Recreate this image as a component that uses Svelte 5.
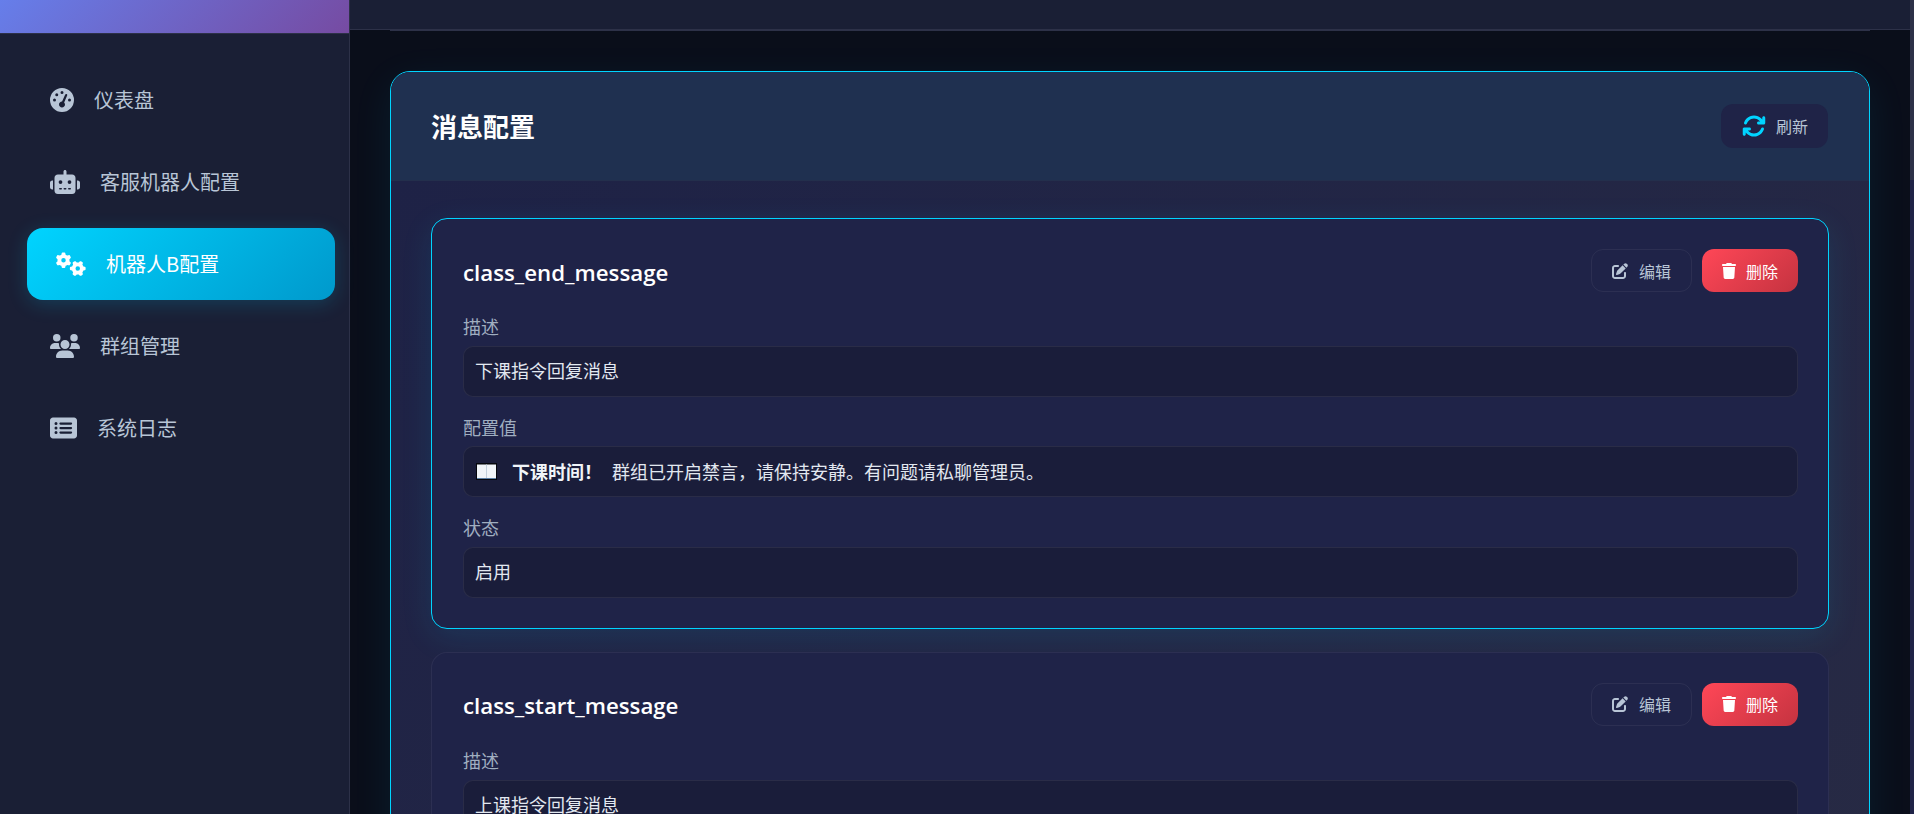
<script>
  const navItems = [
    { label: '仪表盘', icon: 'gauge' },
    { label: '客服机器人配置', icon: 'robot' },
    { label: '机器人B配置', icon: 'gears', active: true },
    { label: '群组管理', icon: 'users' },
    { label: '系统日志', icon: 'list' }
  ];

  const icons = {
    gauge: { box: '0 0 512 512', d: 'M0 256a256 256 0 1 1 512 0A256 256 0 1 1 0 256zM288 96a32 32 0 1 0 -64 0 32 32 0 1 0 64 0zM256 416c35.3 0 64-28.7 64-64c0-17.4-6.9-33.1-18.1-44.6L366 161.7c5.3-12.1-.2-26.3-12.3-31.6s-26.3 .2-31.6 12.3L257.9 288c-.6 0-1.3 0-1.9 0c-35.3 0-64 28.7-64 64s28.7 64 64 64zM176 144a32 32 0 1 0 -64 0 32 32 0 1 0 64 0zM96 288a32 32 0 1 0 0-64 32 32 0 1 0 0 64zm352-32a32 32 0 1 0 -64 0 32 32 0 1 0 64 0z' },
    robot: { box: '0 0 640 512', d: 'M320 0c17.7 0 32 14.3 32 32V96H472c39.8 0 72 32.2 72 72V440c0 39.8-32.2 72-72 72H168c-39.8 0-72-32.2-72-72V168c0-39.8 32.2-72 72-72H288V32c0-17.7 14.3-32 32-32zM208 384c-8.8 0-16 7.2-16 16s7.2 16 16 16h32c8.8 0 16-7.2 16-16s-7.2-16-16-16H208zm96 0c-8.8 0-16 7.2-16 16s7.2 16 16 16h32c8.8 0 16-7.2 16-16s-7.2-16-16-16H304zm96 0c-8.8 0-16 7.2-16 16s7.2 16 16 16h32c8.8 0 16-7.2 16-16s-7.2-16-16-16H400zM264 256a40 40 0 1 0 -80 0 40 40 0 1 0 80 0zm152 40a40 40 0 1 0 0-80 40 40 0 1 0 0 80zM48 224H64V416H48c-26.5 0-48-21.5-48-48V272c0-26.5 21.5-48 48-48zm544 0c26.5 0 48 21.5 48 48v96c0 26.5-21.5 48-48 48H576V224h16z' },
    gears: { box: '0 0 640 512', d: 'M308.5 135.3c7.1-6.3 9.9-16.2 6.2-25c-2.3-5.3-4.8-10.5-7.6-15.5L304 89.4c-3-5-6.3-9.9-9.8-14.6c-5.7-7.6-15.7-10.1-24.7-7.1l-28.2 9.3c-10.7-8.8-23-16-36.2-20.9L199 27.1c-1.9-9.3-9.1-16.7-18.5-17.8C173.9 8.4 167.2 8 160.4 8h-.7c-6.8 0-13.5 .4-20.1 1.2c-9.4 1.1-16.6 8.6-18.5 17.8L115 56.1c-13.3 5-25.5 12.1-36.2 20.9L50.5 67.8c-9-3-19-.5-24.7 7.1c-3.5 4.7-6.8 9.6-9.9 14.6l-3 5.3c-2.8 5-5.3 10.2-7.6 15.6c-3.7 8.7-.9 18.6 6.2 25l22.2 19.8C32.6 161.9 32 168.9 32 176s.6 14.1 1.7 20.9L11.5 216.7c-7.1 6.3-9.9 16.2-6.2 25c2.3 5.3 4.8 10.5 7.6 15.6l3 5.2c3 5.1 6.3 9.9 9.9 14.6c5.7 7.6 15.7 10.1 24.7 7.1l28.2-9.3c10.7 8.8 23 16 36.2 20.9l6.1 29.1c1.9 9.3 9.1 16.7 18.5 17.8c6.7 .8 13.5 1.2 20.4 1.2s13.7-.4 20.4-1.2c9.4-1.1 16.6-8.6 18.5-17.8l6.1-29.1c13.3-5 25.5-12.1 36.2-20.9l28.2 9.3c9 3 19 .5 24.7-7.1c3.5-4.7 6.8-9.5 9.8-14.6l3.1-5.4c2.8-5 5.3-10.2 7.6-15.5c3.7-8.7 .9-18.6-6.2-25l-22.2-19.8c1.1-6.8 1.7-13.8 1.7-20.9s-.6-14.1-1.7-20.9l22.2-19.8zM112 176a48 48 0 1 1 96 0 48 48 0 1 1 -96 0zM504.7 500.5c6.3 7.1 16.2 9.9 25 6.2c5.3-2.3 10.5-4.8 15.5-7.6l5.4-3.1c5-3 9.9-6.3 14.6-9.8c7.6-5.7 10.1-15.7 7.1-24.7l-9.3-28.2c8.8-10.7 16-23 20.9-36.2l29.1-6.1c9.3-1.9 16.7-9.1 17.8-18.5c.8-6.7 1.2-13.5 1.2-20.4s-.4-13.7-1.2-20.4c-1.1-9.4-8.6-16.6-17.8-18.5L583.9 307c-5-13.3-12.1-25.5-20.9-36.2l9.3-28.2c3-9 .5-19-7.1-24.7c-4.7-3.5-9.6-6.8-14.6-9.9l-5.3-3c-5-2.8-10.2-5.3-15.6-7.6c-8.7-3.7-18.6-.9-25 6.2l-19.8 22.2c-6.8-1.1-13.8-1.7-20.9-1.7s-14.1 .6-20.9 1.7l-19.8-22.2c-6.3-7.1-16.2-9.9-25-6.2c-5.3 2.3-10.5 4.8-15.6 7.6l-5.2 3c-5.1 3-9.9 6.3-14.6 9.9c-7.6 5.7-10.1 15.7-7.1 24.7l9.3 28.2c-8.8 10.7-16 23-20.9 36.2L315.1 313c-9.3 1.9-16.7 9.1-17.8 18.5c-.8 6.7-1.2 13.5-1.2 20.4s.4 13.7 1.2 20.4c1.1 9.4 8.6 16.6 17.8 18.5l29.1 6.1c5 13.3 12.1 25.5 20.9 36.2l-9.3 28.2c-3 9-.5 19 7.1 24.7c4.7 3.5 9.5 6.8 14.6 9.8l5.4 3.1c5 2.8 10.2 5.3 15.5 7.6c8.7 3.7 18.6 .9 25-6.2l19.8-22.2c6.8 1.1 13.8 1.7 20.9 1.7s14.1-.6 20.9-1.7l19.8 22.2zM464 304a48 48 0 1 1 0 96 48 48 0 1 1 0-96z' },
    users: { box: '0 0 640 512', d: 'M144 0a80 80 0 1 1 0 160A80 80 0 1 1 144 0zM512 0a80 80 0 1 1 0 160A80 80 0 1 1 512 0zM0 298.7C0 239.8 47.8 192 106.7 192h42.7c15.9 0 31 3.5 44.6 9.7c-1.3 7.2-1.9 14.7-1.9 22.3c0 38.2 16.8 72.5 43.3 96c-.2 0-.4 0-.7 0H21.3C9.6 320 0 310.4 0 298.7zM405.3 320c-.2 0-.4 0-.7 0c26.6-23.5 43.3-57.8 43.3-96c0-7.6-.7-15-1.9-22.3c13.6-6.3 28.7-9.7 44.6-9.7h42.7C592.2 192 640 239.8 640 298.7c0 11.8-9.6 21.3-21.3 21.3H405.3zM224 224a96 96 0 1 1 192 0 96 96 0 1 1 -192 0zM128 485.3C128 411.7 187.7 352 261.3 352H378.7C452.3 352 512 411.7 512 485.3c0 14.7-11.9 26.7-26.7 26.7H154.7c-14.7 0-26.7-11.9-26.7-26.7z' },
    list: { box: '0 0 576 512', d: 'M0 96C0 60.7 28.7 32 64 32H512c35.3 0 64 28.7 64 64V416c0 35.3-28.7 64-64 64H64c-35.3 0-64-28.7-64-64V96zM128 288a32 32 0 1 0 0-64 32 32 0 1 0 0 64zm32-128a32 32 0 1 0 -64 0 32 32 0 1 0 64 0zM128 384a32 32 0 1 0 0-64 32 32 0 1 0 0 64zm96-248c-13.3 0-24 10.7-24 24s10.7 24 24 24H448c13.3 0 24-10.7 24-24s-10.7-24-24-24H224zm0 96c-13.3 0-24 10.7-24 24s10.7 24 24 24H448c13.3 0 24-10.7 24-24s-10.7-24-24-24H224zm0 96c-13.3 0-24 10.7-24 24s10.7 24 24 24H448c13.3 0 24-10.7 24-24s-10.7-24-24-24H224z' },
    sync: { box: '0 0 512 512', d: 'M105.1 202.6c7.7-21.8 20.2-42.3 37.8-59.8c62.5-62.5 163.8-62.5 226.3 0L386.3 160H352c-17.7 0-32 14.3-32 32s14.3 32 32 32H463.5c0 0 0 0 0 0h.4c17.7 0 32-14.3 32-32V80c0-17.7-14.3-32-32-32s-32 14.3-32 32v35.2L414.4 97.6c-87.5-87.5-229.3-87.5-316.8 0C73.2 122 55.6 150.7 44.8 181.4c-5.9 16.7 2.9 34.9 19.5 40.8s34.9-2.9 40.8-19.5zM39 289.3c-5 1.5-9.8 4.2-13.7 8.2c-4 4-6.7 8.8-8.1 14c-.3 1.2-.6 2.5-.8 3.8c-.3 1.7-.4 3.4-.4 5.1V432c0 17.7 14.3 32 32 32s32-14.3 32-32V396.9l17.6 17.5 0 0c87.5 87.4 229.3 87.4 316.7 0c24.4-24.4 42.1-53.1 52.9-83.7c5.9-16.7-2.9-34.9-19.5-40.8s-34.9 2.9-40.8 19.5c-7.7 21.8-20.2 42.3-37.8 59.8c-62.5 62.5-163.8 62.5-226.3 0l-.1-.1L125.6 352H160c17.7 0 32-14.3 32-32s-14.3-32-32-32H48.4c-1.6 0-3.2 .1-4.8 .3s-3.1 .5-4.6 1z' },
    edit: { box: '0 0 512 512', d: 'M471.6 21.7c-21.9-21.9-57.3-21.9-79.2 0L362.3 51.7l97.9 97.9 30.1-30.1c21.9-21.9 21.9-57.3 0-79.2L471.6 21.7zm-299.2 220c-6.1 6.1-10.8 13.6-13.5 21.9l-29.6 88.8c-2.9 8.6-.6 18.1 5.8 24.6s15.9 8.7 24.6 5.8l88.8-29.6c8.2-2.7 15.7-7.4 21.9-13.5L437.7 172.3 339.7 74.3 172.4 241.7zM96 64C43 64 0 107 0 160V416c0 53 43 96 96 96H352c53 0 96-43 96-96V320c0-17.7-14.3-32-32-32s-32 14.3-32 32v96c0 17.7-14.3 32-32 32H96c-17.7 0-32-14.3-32-32V160c0-17.7 14.3-32 32-32h96c17.7 0 32-14.3 32-32s-14.3-32-32-32H96z' },
    trash: { box: '0 0 448 512', d: 'M135.2 17.7L128 32H32C14.3 32 0 46.3 0 64S14.3 96 32 96H416c17.7 0 32-14.3 32-32s-14.3-32-32-32H320l-7.2-14.3C307.4 6.8 296.3 0 284.2 0H163.8c-12.1 0-23.2 6.8-28.6 17.7zM416 128H32L53.2 467c1.6 25.3 22.6 45 47.9 45H346.9c25.3 0 46.3-19.7 47.9-45L416 128z' }
  };

  const configs = [
    {
      key: 'class_end_message',
      selected: true,
      fields: [
        { label: '描述', value: '下课指令回复消息' },
        { label: '配置值', book: true, strong: '下课时间！', value: '群组已开启禁言，请保持安静。有问题请私聊管理员。' },
        { label: '状态', value: '启用' }
      ]
    },
    {
      key: 'class_start_message',
      fields: [
        { label: '描述', value: '上课指令回复消息' }
      ]
    }
  ];
</script>

{#snippet icon(name, cls)}
  <svg class={cls} viewBox={icons[name].box} fill="currentColor" aria-hidden="true"><path d={icons[name].d} /></svg>
{/snippet}

<div class="layout">
  <aside class="sidebar">
    <div class="brand"></div>
    <nav class="nav">
      {#each navItems as item}
        <div class="nav-item" class:active={item.active}>
          {@render icon(item.icon, 'nav-icon')}
          <span>{item.label}</span>
        </div>
      {/each}
    </nav>
  </aside>

  <main class="main">
    <div class="topbar"></div>
    <div class="content">
      <div class="page-rule"></div>
      <section class="panel">
        <header class="panel-head">
          <h2>消息配置</h2>
          <button class="btn refresh">
            {@render icon('sync', 'refresh-icon')}
            <span>刷新</span>
          </button>
        </header>
        <div class="panel-body">
          {#each configs as config}
            <article class="config" class:selected={config.selected}>
              <div class="config-head">
                <h3>{config.key}</h3>
                <div class="actions">
                  <button class="btn edit">
                    {@render icon('edit', 'btn-icon')}
                    <span>编辑</span>
                  </button>
                  <button class="btn danger">
                    {@render icon('trash', 'btn-icon')}
                    <span>删除</span>
                  </button>
                </div>
              </div>
              {#each config.fields as field}
                <div class="field">
                  <div class="field-label">{field.label}</div>
                  <div class="field-value">
                    {#if field.book}
                      <svg class="book" viewBox="0 0 21 17" aria-hidden="true">
                        <rect width="21" height="17" fill="#05070d" />
                        <path d="M1 1.5h19v13.5h-19z" fill="#f1f5f9" />
                        <path d="M10 1.5h1v13.5h-1z" fill="#c3d0dc" />
                        <path d="M1 15h19v1h-19z" fill="#5b7fa6" />
                      </svg>
                    {/if}
                    {#if field.strong}<strong>{field.strong}</strong>{/if}
                    {field.value}
                  </div>
                </div>
              {/each}
            </article>
          {/each}
        </div>
      </section>
    </div>
  </main>
  <div class="scrollbar"><div class="thumb"></div></div>
</div>

<style>
  :global(body) {
    margin: 0;
    background: #0a0e1a;
    overflow: hidden;
  }

  .layout {
    display: flex;
    height: 814px;
    overflow: hidden;
    font-family: "Noto Sans CJK SC", "Noto Sans", sans-serif;
    font-size: 18px;
    line-height: 1.6;
    color: #e2e8f0;
  }

  .sidebar {
    flex: 0 0 349px;
    background: #1a1f35;
    border-right: 1px solid #2d3148;
  }

  .brand {
    height: 33px;
    background: linear-gradient(135deg, #667eea 0%, #764ba2 100%);
    border-bottom: 1px solid #2d3148;
  }

  .nav {
    padding: 30px 20px 0 21px;
  }

  .nav-item {
    display: flex;
    align-items: center;
    gap: 20px;
    height: 72px;
    padding-left: 29px;
    margin-bottom: 10px;
    border-radius: 16px;
    font-size: 20px;
    color: #b8c5d6;
  }

  .nav-item.active {
    transform: translateX(6px);
    color: #fff;
    background: linear-gradient(135deg, #00d4ff 0%, #0099cc 100%);
    box-shadow: 0 4px 20px rgba(0, 212, 255, 0.18);
  }

  .nav-icon {
    height: 24px;
    width: auto;
    color: #b8c5d6;
    flex-shrink: 0;
  }

  .active .nav-icon {
    color: #fff;
  }

  .main {
    flex: 1;
    min-width: 0;
    background: #0a0e1a;
  }

  .topbar {
    height: 29px;
    background: #1a1f35;
    border-bottom: 1px solid #2d3148;
  }

  .content {
    padding: 0 40px;
  }

  .page-rule {
    height: 1px;
    background: #2d3148;
    margin-bottom: 40px;
  }

  .panel {
    border: 1px solid #00d4ff;
    border-radius: 20px;
    background: #1a1f35;
    box-shadow: 0 10px 40px rgba(0, 212, 255, 0.08);
    overflow: hidden;
  }

  .panel-head {
    display: flex;
    align-items: center;
    justify-content: space-between;
    height: 108px;
    padding: 0 41px 0 40px;
    background: #1f3050;
    border-bottom: 1px solid #232f4c;
  }

  .panel-head h2 {
    margin: 0;
    font-size: 26px;
    font-weight: 700;
    color: #fff;
  }

  .panel-body {
    padding: 37px 40px;
    background: linear-gradient(135deg, #1e2246 0%, #272a44 100%);
  }

  .config {
    margin-bottom: 23px;
    padding: 30px 30px 30px 31px;
    border: 1px solid rgba(255, 255, 255, 0.06);
    border-radius: 16px;
    background: #1f2348;
  }

  .config.selected {
    border-color: #00d4ff;
    box-shadow: 0 8px 32px rgba(0, 212, 255, 0.1);
  }

  .config-head {
    display: flex;
    align-items: center;
    justify-content: space-between;
    margin-bottom: 20px;
  }

  .config-head h3 {
    margin: 0;
    padding-top: 4px;
    font-family: "Open Sans", "Noto Sans", sans-serif;
    font-size: 22.25px;
    font-weight: 600;
    color: #fff;
  }

  .actions {
    display: flex;
    gap: 10px;
  }

  .btn {
    display: inline-flex;
    align-items: center;
    justify-content: center;
    gap: 10px;
    box-sizing: border-box;
    height: 43px;
    padding: 0 20px;
    border: 1px solid rgba(255, 255, 255, 0.06);
    border-radius: 12px;
    background: transparent;
    font-family: inherit;
    font-size: 16px;
    color: #b8c5d6;
  }

  .btn-icon {
    height: 16px;
    width: auto;
  }

  .edit {
    gap: 11px;
  }

  .refresh {
    height: 44px;
    padding: 0 20px 0 21px;
    border: 0;
    background: #1f2347;
  }

  .refresh-icon {
    height: 24px;
    width: auto;
    color: #00d4ff;
  }

  .danger {
    border: 0;
    color: #fff;
    background: linear-gradient(135deg, #ff4757 0%, #c53340 100%);
  }

  .field {
    margin-bottom: 16px;
  }

  .field:last-child {
    margin-bottom: 0;
  }

  .field-label {
    margin-bottom: 5px;
    color: #a0aec0;
  }

  .field-value {
    display: flex;
    align-items: center;
    padding: 9.5px 11px 10.5px;
    border: 1px solid rgba(255, 255, 255, 0.07);
    border-radius: 10px;
    background: #1a1d3a;
    color: #e2e8f0;
  }

  .book {
    width: 21px;
    height: 17px;
    margin: 0 15px 0 1px;
  }

  strong {
    margin-right: 10px;
    color: #f1f5f9;
  }

  .scrollbar {
    flex: 0 0 4px;
    background: #1f2347;
  }

  .thumb {
    height: 180px;
    background: #2d3148;
  }
</style>
